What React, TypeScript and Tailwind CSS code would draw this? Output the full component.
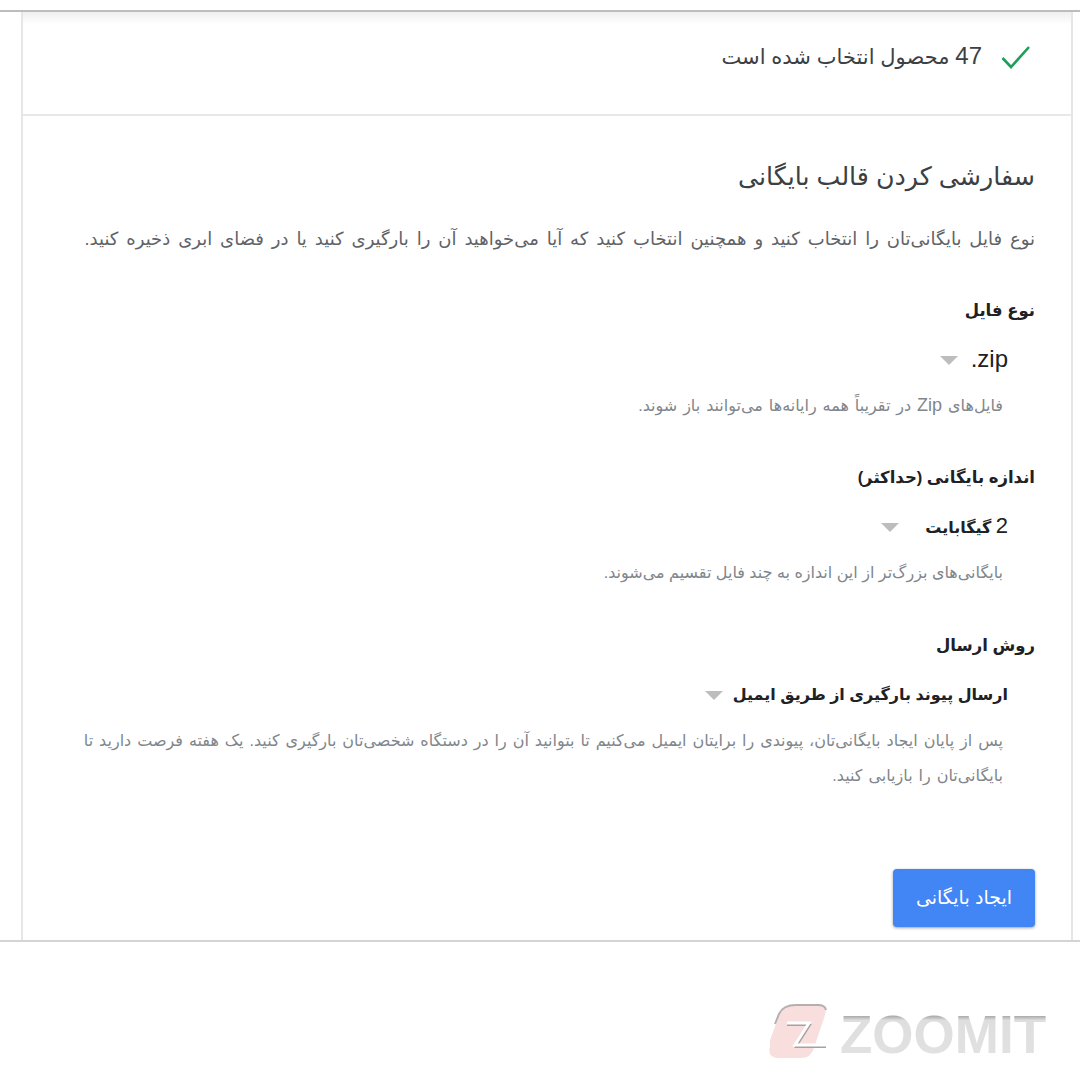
import React from "react";

const font = { fontFamily: '"Liberation Sans", "DejaVu Sans", sans-serif' };

function Caret() {
  return <span className="inline-block w-0 h-0 border-x-[9px] border-x-transparent border-t-[9px] border-t-[#bdbdbd]" />;
}

function Field({ label, value, valueGap, help, helpSpacing, mt }: { label: string; value: React.ReactNode; valueGap: string; help: React.ReactNode; helpSpacing: string; mt: string }) {
  return (
    <section className={mt}>
      <h3 className="text-[16.5px] leading-[20px] font-bold text-[#202124]">{label}</h3>
      <div className={`mt-[28px] mr-[27px] flex items-center h-[24px] ${valueGap}`}>
        <span className="text-[16px] font-bold text-[#202124] leading-[24px]">{value}</span>
        <Caret />
      </div>
      <p className={`mt-[16px] mr-[32px] text-[16px] leading-[35px] text-[#80868b] whitespace-nowrap ${helpSpacing}`}>{help}</p>
    </section>
  );
}

export default function App() {
  return (
    <div dir="rtl" className="w-[1080px] h-[1080px] bg-white overflow-hidden flex flex-col" style={font}>
      <div className="h-[10px] shrink-0" />
      <main className="h-[932px] shrink-0 border-y-2 border-b-[#d4d4d4] border-t-[#bdbdbd] flex flex-col">
        <div className="ml-[21px] mr-[7px] flex-1 border-x-2 border-[#e6e6e6] flex flex-col">
          <header className="h-[104px] shrink-0 border-b-2 border-[#e8e8e8] bg-gradient-to-b from-[#efefef] to-white to-[12%] flex items-start gap-[19px] pt-[30px] pr-[40px]">
            <svg width="30" height="24" viewBox="0 0 30 24" fill="none" className="shrink-0 mt-[3px]">
              <path d="M1.5 13 L10 22 L28 2" stroke="#1e9e5a" strokeWidth="2.6" />
            </svg>
            <span className="text-[21px] leading-[28px] text-[#3c4043]">
              <span className="text-[24px] text-[#3c4043]">47</span> محصول انتخاب شده است
            </span>
          </header>
          <div className="pr-[36px] pl-[40px] flex-1 flex flex-col">
            <h2 className="mt-[43px] text-[25.3px] leading-[34px] text-[#3c4043]">سفارشی کردن قالب بایگانی</h2>
            <p className="mt-[33px] text-[18px] leading-[26px] text-[#5f6368] whitespace-nowrap [word-spacing:2.9px]">
              نوع فایل بایگانی‌تان را انتخاب کنید و همچنین انتخاب کنید که آیا می‌خواهید آن را بارگیری کنید یا در فضای ابری ذخیره کنید.
            </p>
            <Field mt="mt-[48px]" label="نوع فایل" value={<bdi dir="ltr" className="text-[24px] font-normal">.zip</bdi>} valueGap="gap-[13px]" helpSpacing="[word-spacing:1.5px]" help={<>فایل‌های <span className="text-[18px]">Zip</span> در تقریباً همه رایانه‌ها می‌توانند باز شوند.</>} />
            <Field mt="mt-[44px]" label="اندازه بایگانی (حداکثر)" value={<><span className="text-[22px] font-normal">2</span> گیگابایت</>} valueGap="gap-[26px]" helpSpacing="[word-spacing:0px]" help="بایگانی‌های بزرگ‌تر از این اندازه به چند فایل تقسیم می‌شوند." />
            <Field mt="mt-[45px]" label="روش ارسال" value="ارسال پیوند بارگیری از طریق ایمیل" valueGap="gap-[10px]" helpSpacing="[word-spacing:1.5px]" help={<>پس از پایان ایجاد بایگانی‌تان، پیوندی را برایتان ایمیل می‌کنیم تا بتوانید آن را در دستگاه شخصی‌تان بارگیری کنید. یک هفته فرصت دارید تا<br />بایگانی‌تان را بازیابی کنید.</>} />
            <div className="mt-auto mb-[13px] flex">
              <button className="w-[142px] h-[58px] rounded-[4px] bg-[#4285f4] text-white text-[19px] shadow-[0_1px_3px_rgba(60,64,67,0.5)]">ایجاد بایگانی</button>
            </div>
          </div>
        </div>
      </main>
      <div dir="ltr" className="flex-1 flex justify-end items-start pt-[60px] pr-[22px]">
        <svg width="290" height="76" viewBox="0 0 290 76">
          <defs>
            <linearGradient id="zm" x1="0" y1="0" x2="0" y2="1">
              <stop offset="0.2" stopColor="#a9a9a9" />
              <stop offset="0.27" stopColor="#dedede" />
              <stop offset="1" stopColor="#e2e2e2" />
            </linearGradient>
          </defs>
          <g transform="translate(-2 0)">
            <path d="M4 38 L13 14 Q17 3 30 3 H52 Q62 3 59 13 L48 46 Q45 56 35 56 H12 Q1 56 4 44 Z" fill="#f9dede" />
            <path d="M9 22 L13 12 Q17 3 30 3 H52 Q59 3 60 8" fill="none" stroke="#b5b0b0" strokeWidth="2" />
            <path d="M21 23 H44 L30 45 H60" fill="none" stroke="#a5a1a1" strokeWidth="2" />
            <path d="M21 21 H43 L29 43 H60" fill="none" stroke="#ffffff" strokeWidth="3" />
          </g>
          <text x="72" y="51" textLength="206" lengthAdjust="spacingAndGlyphs" fontSize="54" fontWeight="700" fill="url(#zm)" style={{ fontFamily: '"Liberation Sans", sans-serif' }}>ZOOMIT</text>
        </svg>
      </div>
    </div>
  );
}
